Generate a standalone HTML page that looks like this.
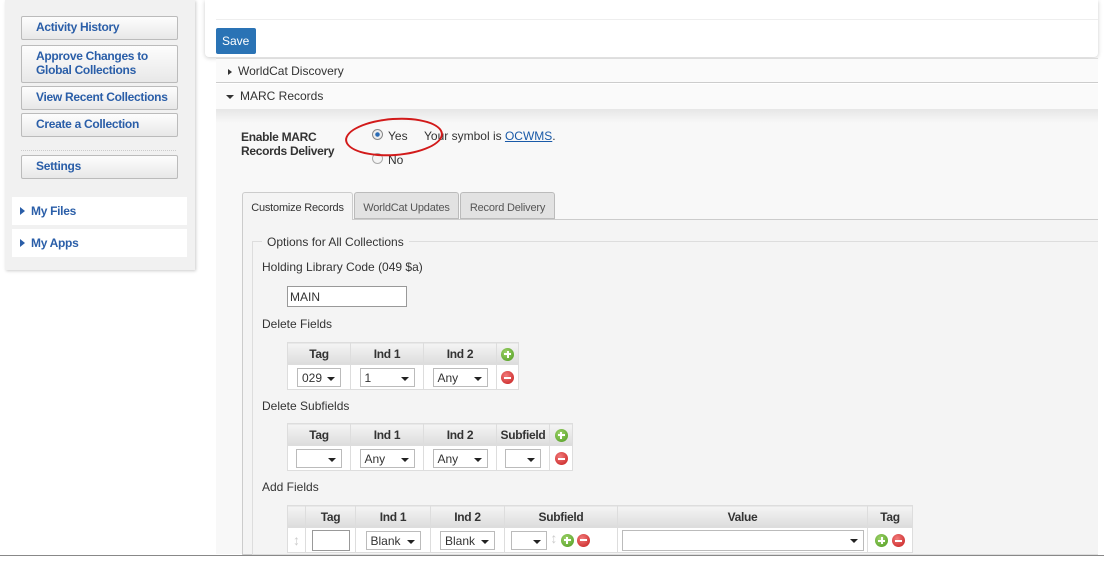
<!DOCTYPE html>
<html><head><style>
*{box-sizing:border-box;margin:0;padding:0}
body{width:1104px;height:562px;position:relative;background:#fff;font-family:"Liberation Sans",Arial,sans-serif;font-size:12px;color:#333;overflow:hidden}
.a{position:absolute}
.btn{position:absolute;left:21px;width:157px;border:1px solid #bbb;border-radius:2px;background:linear-gradient(#fdfdfd,#e8e8e8);color:#2a5ea8;font-weight:bold;font-size:12px;padding:3px 0 3px 14px;line-height:14px;letter-spacing:-0.3px}
.nw{white-space:nowrap}
.side{position:absolute;left:12px;width:175px;height:28px;background:#fff;color:#2a5ea8;font-weight:bold;padding:7px 8px;letter-spacing:-0.3px}
.tri{display:inline-block;width:0;height:0;border-left:5px solid #2a5ea8;border-top:4px solid transparent;border-bottom:4px solid transparent;margin-right:6px}
table{border-collapse:collapse;position:absolute;background:#fff}
td,th{border:1px solid #ddd;text-align:center;padding:0}
th{background:linear-gradient(#f4f4f4,#dcdcdc);font-size:12px;color:#333;height:22px;letter-spacing:-0.3px}
td{height:25px}
.sel{display:inline-block;border:1px solid #bbb;background:#fff;height:19px;vertical-align:middle;position:relative;text-align:left;padding:2px 4px;font-size:12px;line-height:14px}
.sel:after{content:"";position:absolute;right:5px;top:8px;border-left:4px solid transparent;border-right:4px solid transparent;border-top:4px solid #222}
.plus,.minus{display:inline-block;width:13px;height:13px;border-radius:50%;vertical-align:middle;position:relative}
.plus{background:radial-gradient(circle at 40% 35%,#9fd36a,#4c9a1e)}
.minus{background:radial-gradient(circle at 40% 35%,#f27b7b,#c41c1c)}
.plus:before,.minus:before{content:"";position:absolute;left:3px;top:5.5px;width:7px;height:2px;background:#fff}
.plus:after{content:"";position:absolute;left:5.5px;top:3px;width:2px;height:7px;background:#fff}
.lbl{position:absolute;font-size:12px;color:#333}
.tab{position:absolute;top:192px;height:27px;border:1px solid #bbb;background:#e2e2e2;border-radius:3px 3px 0 0;font-size:11px;padding:9px 0;text-align:center;color:#555;white-space:nowrap;letter-spacing:-0.2px}
</style></head><body>
<!-- sidebar -->
<div class="a" style="left:5px;top:0;width:190px;height:270px;background:#f1f1f1;box-shadow:1px 1px 3px #ccc"></div>
<div class="btn nw" style="top:16px;height:24px">Activity History</div>
<div class="btn" style="top:45px;height:38px">Approve Changes to Global Collections</div>
<div class="btn nw" style="top:86px;height:24px">View Recent Collections</div>
<div class="btn nw" style="top:113px;height:24px">Create a Collection</div>
<div class="a" style="left:21px;top:150px;width:155px;border-top:1px dotted #ccc"></div>
<div class="btn nw" style="top:155px;height:24px">Settings</div>
<div class="side" style="top:197px"><span class="tri"></span>My Files</div>
<div class="side" style="top:229px"><span class="tri"></span>My Apps</div>
<!-- main -->
<div class="a" style="left:205px;top:0;width:893px;height:57px;background:#fff;box-shadow:0 1px 4px #ccc;border-radius:0 0 4px 4px"></div>
<div class="a" style="left:216px;top:0;width:882px;height:20px;border-bottom:1px solid #eee"></div>
<div class="a" style="left:216px;top:28px;width:40px;height:26px;background:#2a73b5;border-radius:2px;color:#fff;font-size:12px;padding:6px 6px">Save</div>
<div class="a" style="left:216px;top:58px;width:882px;height:25px;background:#fafafa;border-top:1px solid #ddd;border-bottom:1px solid #ccc;padding:5px 12px;font-size:12px"><span class="tri" style="border-left-color:#333;border-left-width:4px;border-top-width:3px;border-bottom-width:3px"></span>WorldCat Discovery</div>
<div class="a" style="left:216px;top:84px;width:882px;height:25px;background:#fafafa;padding:5px 10px;font-size:12px"><span style="display:inline-block;border-left:4px solid transparent;border-right:4px solid transparent;border-top:4px solid #333;margin-right:6px;vertical-align:middle"></span>MARC Records</div>
<div class="a" style="left:216px;top:109px;width:882px;height:445px;background:linear-gradient(#e6e6e6,#f8f8f8 14px)"></div>
<div class="lbl" style="left:241px;top:130px;font-weight:bold;line-height:14px;letter-spacing:-0.3px">Enable MARC<br>Records Delivery</div>
<div class="a" style="left:372px;top:129px;width:11px;height:11px;border-radius:50%;border:1px solid #888;background:radial-gradient(#2a6bb5 30%,#eee 40%)"></div>
<div class="lbl" style="left:388px;top:129px">Yes &nbsp;&nbsp;&nbsp; Your symbol is <span style="color:#1a5aa8;text-decoration:underline">OCWMS</span>.</div>
<div class="a" style="left:372px;top:153px;width:11px;height:11px;border-radius:50%;border:1px solid #aaa;background:#f4f4f4"></div>
<div class="lbl" style="left:388px;top:153px">No</div>
<div class="a" style="left:345px;top:118px;width:98px;height:38px;border:2px solid #d21a1a;border-radius:50%;transform:rotate(-4deg)"></div>
<!-- tabs -->
<div class="a" style="left:242px;top:219px;width:856px;height:336px;border:1px solid #ccc;border-right:none;background:#f4f4f4"></div>
<div class="tab" style="left:242px;width:111px;height:28px;background:#f4f4f4;border-color:#ccc;border-bottom:none;color:#333">Customize Records</div>
<div class="tab" style="left:354px;width:105px">WorldCat Updates</div>
<div class="tab" style="left:460px;width:95px">Record Delivery</div>
<div class="a" style="left:252px;top:241px;width:846px;height:314px;border:1px solid #ddd;border-right:none"></div>
<div class="lbl" style="left:262px;top:235px;background:#f4f4f4;padding:0 5px">Options for All Collections</div>
<div class="lbl" style="left:262px;top:260px">Holding Library Code (049 $a)</div>
<div class="a" style="left:287px;top:286px;width:120px;height:21px;border:1px solid #999;background:#fff;padding:3px 2px;font-size:12px">MAIN</div>
<div class="lbl" style="left:262px;top:317px">Delete Fields</div>
<table style="left:287px;top:342px;width:232px">
<tr><th style="width:63px">Tag</th><th style="width:73px">Ind 1</th><th style="width:73px">Ind 2</th><th><span class="plus"></span></th></tr>
<tr><td><span class="sel" style="width:44px">029</span></td><td><span class="sel" style="width:55px">1</span></td><td><span class="sel" style="width:55px">Any</span></td><td><span class="minus"></span></td></tr>
</table>
<div class="lbl" style="left:262px;top:399px">Delete Subfields</div>
<table style="left:287px;top:423px;width:286px">
<tr><th style="width:63px">Tag</th><th style="width:73px">Ind 1</th><th style="width:73px">Ind 2</th><th style="width:53px">Subfield</th><th><span class="plus"></span></th></tr>
<tr><td><span class="sel" style="width:46px"></span></td><td><span class="sel" style="width:55px">Any</span></td><td><span class="sel" style="width:55px">Any</span></td><td><span class="sel" style="width:36px"></span></td><td><span class="minus"></span></td></tr>
</table>
<div class="lbl" style="left:262px;top:480px">Add Fields</div>
<table style="left:287px;top:505px;width:626px">
<tr><th style="width:18px"></th><th style="width:50px">Tag</th><th style="width:75px">Ind 1</th><th style="width:74px">Ind 2</th><th style="width:113px">Subfield</th><th style="width:250px">Value</th><th>Tag</th></tr>
<tr><td style="color:#ccc;font-size:14px">↕</td><td><span style="display:inline-block;width:38px;height:21px;border:1px solid #999;background:#fff;vertical-align:middle"></span></td><td><span class="sel" style="width:55px">Blank</span></td><td><span class="sel" style="width:55px">Blank</span></td>
<td style="text-align:left;padding-left:6px;white-space:nowrap"><span class="sel" style="width:36px"></span> <span style="color:#ccc;font-size:14px">↕</span> <span class="plus"></span> <span class="minus"></span></td>
<td><span class="sel" style="width:242px;height:21px"></span></td><td style="white-space:nowrap"><span class="plus"></span> <span class="minus"></span></td></tr>
</table>
<div class="a" style="left:0;top:555px;width:1104px;border-top:1px solid #888"></div>
<div class="a" style="left:0;top:556px;width:1104px;height:6px;background:#fff"></div>
</body></html>
